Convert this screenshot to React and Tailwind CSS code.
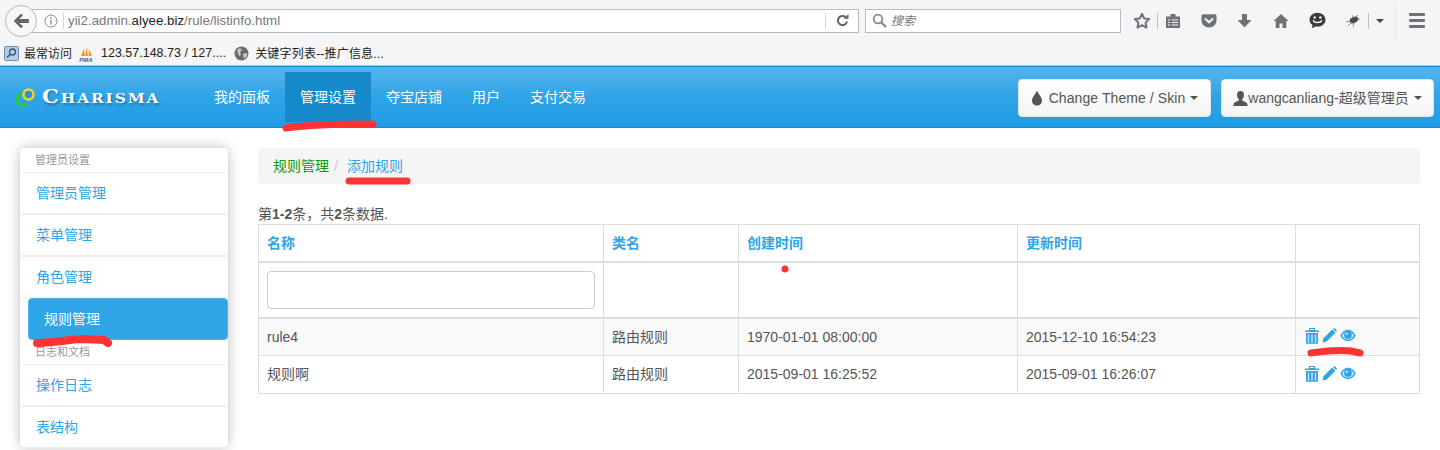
import React from "react";

const FONT = "font-['Liberation_Sans','Noto_Sans_CJK_SC',sans-serif]";

function Trash() {
  return (
    <svg width="14" height="16" viewBox="0 0 14 16" className="shrink-0">
      <rect x="4.500" y="0.500" width="5" height="2" fill="none" stroke="#2fa4e7" strokeWidth="1" />
      <rect x="0" y="2.500" width="14" height="1.500" fill="#2fa4e7" />
      <path d="M1 5h12v10a.8.8 0 0 1-.8.8H1.800A.8.8 0 0 1 1 15z" fill="#2fa4e7" />
      <path d="M3.500 6.500v8M7 6.500v8M10.500 6.500v8" stroke="#bfe3f8" strokeWidth="1.500" />
    </svg>
  );
}

function Pencil() {
  return (
    <svg width="15" height="15" viewBox="0 0 15 15" className="shrink-0">
      <path d="M0.500 14.500l1-4.200L10.200 1.600l3.200 3.200-8.700 8.700z" fill="#2fa4e7" />
      <path d="M11 .9l.7-.5c.4-.3.9-.3 1.200 0l1.700 1.700c.3.300.3.800 0 1.200l-.5.700z" fill="#2fa4e7" />
    </svg>
  );
}

function Eye() {
  return (
    <svg width="16" height="13" viewBox="0 0 16 13" className="shrink-0">
      <path d="M0.300 6.500C2.200 2.600 5 .8 8 .8s5.800 1.800 7.700 5.700C13.800 10.400 11 12.200 8 12.200S2.200 10.400.3 6.500z" fill="#2fa4e7" />
      <path d="M2 6.500C3.600 3.700 5.600 2.200 8 2.200s4.400 1.500 6 4.300c-1.600 2.800-3.600 4.300-6 4.300S3.600 9.300 2 6.500z" fill="#d4ecfa" />
      <circle cx="8" cy="6" r="3.900" fill="#2fa4e7" />
      <circle cx="6.800" cy="4.800" r="1.100" fill="#d4ecfa" />
    </svg>
  );
}

function Actions() {
  return (
    <div className="flex items-center gap-[3px] ml-[1px] -mt-[2px]">
      <Trash />
      <Pencil />
      <Eye />
    </div>
  );
}

function Caret({ color = "#555" }) {
  return <span className="inline-block w-0 h-0 border-x-[4px] border-x-transparent border-t-[4px]" style={{ borderTopColor: color }} />;
}

function ToolIcons() {
  return (
    <div className="flex items-center h-[24px] ml-[12px] text-[#6f7378]">
      <svg width="18" height="18" viewBox="0 0 18 18">
        <path d="M9 1.800l2.200 4.600 5 .7-3.600 3.500.9 5L9 13.200l-4.500 2.400.9-5L1.800 7.100l5-.7z" fill="none" stroke="#6f7378" strokeWidth="2" strokeLinejoin="round" />
      </svg>
      <div className="w-px h-[16px] bg-[#bcc3ca] ml-[6px]" />
      <svg width="16" height="16" viewBox="0 0 16 16" className="ml-[7px]">
        <path d="M1 3.500h14V15H1z" fill="#6f7378" />
        <rect x="5.500" y="1" width="5" height="3" fill="#6f7378" />
        <path d="M3 7h2M3 9.500h2M3 12h2M6.500 7H13M6.500 9.500H13M6.500 12H13" stroke="#f5f5f5" strokeWidth="1.200" />
      </svg>
      <svg width="16" height="16" viewBox="0 0 16 16" className="ml-[20px]">
        <path d="M0.500 3c0-1 .7-1.700 1.700-1.700h11.600c1 0 1.700.7 1.700 1.700v4.500c0 4-3.400 7-7.500 7S.5 11.500.5 7.500z" fill="#6f7378" />
        <path d="M4.500 6l3.500 3.300L11.500 6" fill="none" stroke="#f5f5f5" strokeWidth="2" strokeLinecap="round" />
      </svg>
      <svg width="15" height="15" viewBox="0 0 15 15" className="ml-[20px]">
        <path d="M5 1h5v6h4.500l-7 7.500-7-7.500H5z" fill="#6f7378" />
      </svg>
      <svg width="16" height="16" viewBox="0 0 16 16" className="ml-[21px]">
        <path d="M8 1L.5 8h2.200v7h3.800v-4.500h3V15h3.800V8h2.200z" fill="#6f7378" />
      </svg>
      <svg width="17" height="17" viewBox="0 0 17 17" className="ml-[20px]">
        <path d="M8.500.8c4.400 0 8 2.900 8 6.900s-3.600 6.900-8 6.900c-.7 0-1.300-.1-1.900-.2L3 16.300l.5-3.300C1.600 11.700.5 9.800.5 7.700.5 3.700 4.100.8 8.500.8z" fill="#3a3d40" />
        <circle cx="5.700" cy="5.500" r="1.200" fill="#f5f5f5" />
        <circle cx="11.300" cy="5.500" r="1.200" fill="#f5f5f5" />
        <path d="M4.500 8.700c1 2.400 7 2.400 8 0" fill="none" stroke="#f5f5f5" strokeWidth="1.400" strokeLinecap="round" />
      </svg>
      <svg width="16" height="14" viewBox="0 0 16 14" className="ml-[19px]">
        <ellipse cx="9" cy="6" rx="4.500" ry="3" transform="rotate(-25 9 6)" fill="#4a4a4a" />
        <path d="M1 8l5-1M3 12l4-4M8 13l1-5M13 1l-3 3M7 1l2 3M15 5l-3 1" stroke="#777" strokeWidth="0.800" />
      </svg>
      <div className="w-px h-[16px] bg-[#bcc3ca] ml-[7px]" />
      <span className="ml-[7px] inline-block w-0 h-0 border-x-[4px] border-x-transparent border-t-[4px] border-t-[#444]" />
      <div className="w-px h-[38px] bg-[#e6e6e6] ml-[11px]" />
      <div className="ml-[13px] flex flex-col gap-[3px]">
        <div className="w-[16px] h-[3px] rounded-[1px] bg-[#6f7378]" />
        <div className="w-[16px] h-[3px] rounded-[1px] bg-[#6f7378]" />
        <div className="w-[16px] h-[3px] rounded-[1px] bg-[#6f7378]" />
      </div>
    </div>
  );
}

function BrowserChrome() {
  return (
    <div className="h-[66px] bg-[#f5f5f5] border-b border-[#c8ccd0]">
      <div className="h-[41px] flex items-center pl-[5px]">
        <div className="relative z-10 w-[32px] h-[32px] rounded-full border border-[#b1bbc6] bg-[#f7f7f7] flex items-center justify-center">
          <svg width="18" height="18" viewBox="0 0 16 16">
            <path d="M8 1.500L1.500 8 8 14.500l1.800-1.800L6.400 9.800H15V6.200H6.400l3.400-3.400z" fill="#666" />
          </svg>
        </div>
        <div className="-ml-[7px] w-[829px] h-[24px] bg-white border border-[#b4bec9] flex items-center pl-[13px] text-[13.300px]">
          <svg width="14" height="14" viewBox="0 0 14 14" className="shrink-0">
            <circle cx="7" cy="7" r="6" fill="none" stroke="#8c8c8c" strokeWidth="1" />
            <rect x="6.300" y="6" width="1.400" height="4.500" fill="#8c8c8c" />
            <rect x="6.300" y="3.400" width="1.400" height="1.500" fill="#8c8c8c" />
          </svg>
          <div className="w-px h-[16px] bg-[#d5d5d5] ml-[5px] mr-[4px]" />
          <span className="text-[#777]">
            yii2.admin.<span className="text-[#222]">alyee.biz</span>/rule/listinfo.html
          </span>
          <div className="ml-auto w-px h-[16px] bg-[#d5d5d5]" />
          <div className="w-[32px] flex justify-center">
            <svg width="13" height="13" viewBox="0 0 13 13">
              <path d="M11 7.500A4.600 4.600 0 1 1 9.500 3" fill="none" stroke="#666" strokeWidth="2" />
              <path d="M7.500 4.800h5V0z" fill="#666" />
            </svg>
          </div>
        </div>
        <div className="ml-[6px] w-[256px] h-[24px] bg-white border border-[#b4bec9] flex items-center pl-[6px]">
          <svg width="15" height="15" viewBox="0 0 15 15">
            <circle cx="6" cy="6" r="4.300" fill="none" stroke="#888" strokeWidth="1.800" />
            <path d="M9.300 9.300L14 14" stroke="#888" strokeWidth="2.200" />
          </svg>
          <span className="ml-[4px] text-[12px] italic text-[#777]">搜索</span>
        </div>
        <ToolIcons />
      </div>
      <div className="h-[24px] flex items-center pl-[4px] pt-[1px] text-[12px] text-[#222]">
        <svg width="15" height="15" viewBox="0 0 15 15" className="shrink-0">
          <rect x="0.500" y="0.500" width="14" height="14" rx="1" fill="#b4cce4" stroke="#6d8fb3" />
          <circle cx="8.500" cy="6" r="3" fill="none" stroke="#33587d" strokeWidth="1.300" />
          <path d="M6 8.500l-3 3" stroke="#33587d" strokeWidth="1.600" />
        </svg>
        <span className="ml-[5px]">最常访问</span>
        <svg width="16" height="16" viewBox="0 0 16 16" className="shrink-0 ml-[6px]">
          <path d="M3 10L6 2l1 8zM7 10L9 1l1 9zM10.500 10L11 3l3 7z" fill="#f29a1f" />
          <text x="8" y="15.500" textAnchor="middle" fontSize="6" fontWeight="bold" fontStyle="italic" fill="#4a5c8c">PMA</text>
        </svg>
        <span className="ml-[7px] text-[12.500px]">123.57.148.73 / 127....</span>
        <svg width="15" height="15" viewBox="0 0 15 15" className="shrink-0 ml-[8px]">
          <circle cx="7.500" cy="7.500" r="7" fill="#6b6b6b" />
          <path d="M3 4l3-2 2 2-2 2 1 3-2 1zM9 8l4-1 0 3-3 3z" fill="#c9c9c9" />
        </svg>
        <span className="ml-[6px] tracking-[0.200px]">关键字列表--推广信息...</span>
      </div>
    </div>
  );
}

function Navbar() {
  const items = ["我的面板", "管理设置", "夺宝店铺", "用户", "支付交易"];
  return (
    <div className="h-[62px] border-y border-[#178acc] bg-gradient-to-b from-[#54b4eb] via-[#2fa4e7] to-[#1d9ce5] flex items-start pl-[15px] pr-[6px]">
      <div className="w-[146px] h-[60px] flex items-center shrink-0">
        <svg width="25" height="20" viewBox="0 0 25 20" className="shrink-0 mt-[-1px]">
          <path d="M7 6A7 7 0 0 0 2 12.500 6 6 0 0 0 12 17" fill="none" stroke="#35c43a" strokeWidth="2.500" />
          <circle cx="13.500" cy="7.500" r="5" fill="#2a94d8" stroke="#f5d327" strokeWidth="2.500" />
        </svg>
        <span className="inline-block origin-left scale-x-[1.18] ml-[2px] font-['DejaVu_Serif',serif] font-bold text-white text-[18px] leading-none [font-variant:small-caps] tracking-[1.600px] [text-shadow:1px_2px_2px_rgba(0,0,0,0.3)] whitespace-nowrap">
          Charisma
        </span>
      </div>
      <div className="flex items-start pt-[5px] ml-[38px]">
        {items.map((t, i) => (
          <div
            key={t}
            className={`h-[50px] flex items-center px-[15px] text-[14px] text-white ${i === 1 ? "bg-[#178acc]" : ""}`}
          >
            {t}
          </div>
        ))}
      </div>
      <div className="ml-auto flex gap-[10px] pt-[12px] text-[14px] text-[#555]">
        <div className="w-[193px] h-[38px] rounded-[4px] border border-[#e6e6e6] bg-gradient-to-b from-white to-[#f4f4f4] flex items-center justify-center tracking-[0.080px]">
          <svg width="12" height="16" viewBox="0 0 12 16" className="mr-[6px]">
            <path d="M6 .5C4.800 4 1 7 1 10.500 1 13.500 3.200 15.500 6 15.500s5-2 5-5C11 7 7.200 4 6 .5z" fill="#555" />
          </svg>
          Change Theme / Skin
          <span className="ml-[5px] inline-flex"><Caret /></span>
        </div>
        <div className="w-[213px] h-[38px] rounded-[4px] border border-[#e6e6e6] bg-gradient-to-b from-white to-[#f4f4f4] flex items-center justify-center whitespace-nowrap">
          <svg width="15" height="15" viewBox="0 0 15 15">
            <path d="M7.500 0C5.300 0 4 1.700 4 3.900c0 1.800.8 3.400 1.800 4.300v1.300C3.500 10.500.5 11.500.5 13.500V15h14v-1.500c0-2-3-3-5.300-4V8.200c1-.9 1.800-2.500 1.800-4.300C11 1.700 9.700 0 7.500 0z" fill="#555" />
          </svg>
          wangcanliang-超级管理员
          <span className="ml-[5px] inline-flex"><Caret /></span>
        </div>
      </div>
    </div>
  );
}

function SideHeader({ children }) {
  return <div className="h-[24px] pl-[15px] pt-[5px] text-[11px] leading-[14px] text-[#999]">{children}</div>;
}

function SideItem({ children, active }) {
  if (active) {
    return (
      <div className="h-[42px] ml-[8px] pl-[15px] flex items-center rounded-[4px] bg-[#2fa4e7] border border-[#52b3eb] text-[14px] text-white">
        {children}
      </div>
    );
  }
  return (
    <div className="h-[42px] pl-[16px] flex items-center rounded-[4px] border-y border-[#eee] text-[14px] text-[#2fa4e7]">
      {children}
    </div>
  );
}

function Sidebar() {
  return (
    <div className="w-[208px] shrink-0 h-[299px] rounded-[4px] bg-white shadow-[0_0_12px_rgba(170,170,170,0.8)]">
      <SideHeader>管理员设置</SideHeader>
      <SideItem>管理员管理</SideItem>
      <SideItem>菜单管理</SideItem>
      <SideItem>角色管理</SideItem>
      <SideItem active>规则管理</SideItem>
      <SideHeader>日志和文档</SideHeader>
      <SideItem>操作日志</SideItem>
      <SideItem>表结构</SideItem>
    </div>
  );
}

function Content() {
  const td = "border border-[#ddd] px-[8px] align-middle";
  const th = `${td} pt-[2px] text-left font-bold text-[#2fa4e7] border-b-2`;
  const r3 = `${td} pt-[2px]`;
  return (
    <div className="w-[1162px] ml-[30px]">
      <div className="h-[36px] rounded-[4px] bg-[#f5f5f5] flex items-center pl-[15px] text-[14px]">
        <span className="text-[#0a9a0a]">规则管理</span>
        <span className="text-[#ccc] ml-[5px] mr-[8px]">/</span>
        <span className="text-[#2fa4e7] ml-[1px]">添加规则</span>
      </div>
      <div className="mt-[21px] h-[19px] text-[14px] leading-[19px] text-[#555]">
        第<b>1-2</b>条，共<b>2</b>条数据.
      </div>
      <table className="w-[1161px] table-fixed border-collapse text-[14px] text-[#555]">
        <colgroup>
          <col className="w-[345px]" />
          <col className="w-[135px]" />
          <col className="w-[279px]" />
          <col className="w-[278px]" />
          <col className="w-[124px]" />
        </colgroup>
        <tbody>
          <tr className="h-[37px]">
            <th className={th}>名称</th>
            <th className={th}>类名</th>
            <th className={th}>创建时间</th>
            <th className={th}>更新时间</th>
            <th className={th}></th>
          </tr>
          <tr className="h-[56px]">
            <td className={`${td} border-b-2`}>
              <div className="h-[38px] w-[328px] rounded-[4px] border border-[#ccc] bg-white" />
            </td>
            <td className={`${td} border-b-2`}></td>
            <td className={`${td} border-b-2`}></td>
            <td className={`${td} border-b-2`}></td>
            <td className={`${td} border-b-2`}></td>
          </tr>
          <tr className="h-[38px] bg-[#f9f9f9]">
            <td className={r3}>rule4</td>
            <td className={r3}>路由规则</td>
            <td className={r3}>1970-01-01 08:00:00</td>
            <td className={r3}>2015-12-10 16:54:23</td>
            <td className={td}><Actions /></td>
          </tr>
          <tr className="h-[38px]">
            <td className={td}>规则啊</td>
            <td className={td}>路由规则</td>
            <td className={td}>2015-09-01 16:25:52</td>
            <td className={td}>2015-09-01 16:26:07</td>
            <td className={td}><Actions /></td>
          </tr>
        </tbody>
      </table>
    </div>
  );
}

function Scribbles() {
  const c = "#ff3333";
  return (
    <svg width="1440" height="450" className="absolute left-0 top-0 pointer-events-none">
      <path d="M286 128c20-3 60-4 87-4" fill="none" stroke={c} strokeWidth="7" strokeLinecap="round" />
      <path d="M349 181h58" fill="none" stroke={c} strokeWidth="7" strokeLinecap="round" />
      <path d="M37 343c20-1 30-3 45-4l22 1 4 3" fill="none" stroke={c} strokeWidth="8" strokeLinecap="round" />
      <path d="M1311 353c15-2 30-3 40-2l9 2" fill="none" stroke={c} strokeWidth="7" strokeLinecap="round" />
      <circle cx="785" cy="269" r="3.500" fill={c} />
    </svg>
  );
}

export default function App() {
  return (
    <div className={`relative w-[1440px] h-[450px] overflow-hidden bg-white ${FONT}`}>
      <BrowserChrome />
      <Navbar />
      <div className="flex pl-[20px] pt-[20px]">
        <Sidebar />
        <Content />
      </div>
      <Scribbles />
    </div>
  );
}
